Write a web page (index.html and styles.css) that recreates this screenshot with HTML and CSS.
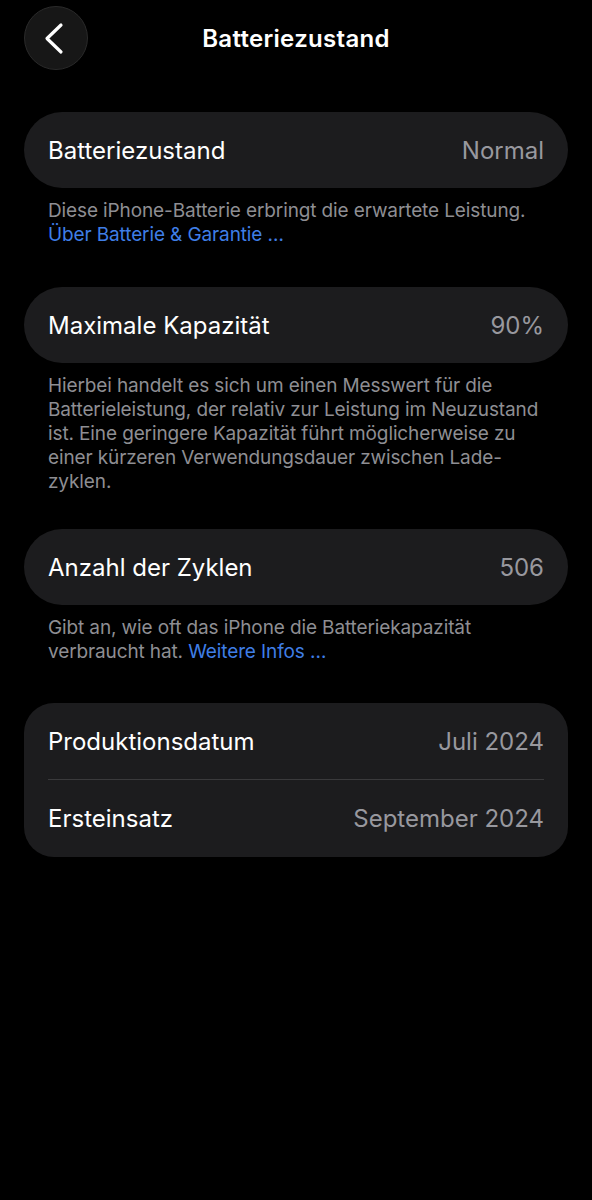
FILE: index.html
```html
<!DOCTYPE html>
<html lang="de">
<head>
<meta charset="utf-8">
<title>Batteriezustand</title>
<link rel="stylesheet" href="styles.css">
</head>
<body>
<div class="screen">
  <header class="nav">
    <button class="back" aria-label="Zurück">
      <svg width="64" height="64" viewBox="0 0 64 64"><path d="M37 19 L23 32.5 L37 46" fill="none" stroke="#fff" stroke-width="3.2" stroke-linecap="round" stroke-linejoin="round"/></svg>
    </button>
    <h1 class="title">Batteriezustand</h1>
    <span></span>
  </header>

  <section class="group">
    <div class="card">
      <div class="row"><span class="label">Batteriezustand</span><span class="value">Normal</span></div>
    </div>
    <p class="footer">Diese iPhone-Batterie erbringt die erwartete Leistung.<br><a class="link">Über Batterie &amp; Garantie …</a></p>
  </section>

  <section class="group">
    <div class="card">
      <div class="row"><span class="label">Maximale Kapazität</span><span class="value">90%</span></div>
    </div>
    <p class="footer">Hierbei handelt es sich um einen Messwert für die<br>Batterieleistung, der relativ zur Leistung im Neuzustand<br>ist. Eine geringere Kapazität führt möglicherweise zu<br>einer kürzeren Verwendungsdauer zwischen Lade-<br>zyklen.</p>
  </section>

  <section class="group">
    <div class="card">
      <div class="row"><span class="label">Anzahl der Zyklen</span><span class="value">506</span></div>
    </div>
    <p class="footer">Gibt an, wie oft das iPhone die Batteriekapazität<br>verbraucht hat. <a class="link">Weitere Infos …</a></p>
  </section>

  <section class="group">
    <div class="card card-multi">
      <div class="row"><span class="label">Produktionsdatum</span><span class="value">Juli 2024</span></div>
      <div class="sep"></div>
      <div class="row"><span class="label">Ersteinsatz</span><span class="value">September 2024</span></div>
    </div>
  </section>
</div>
</body>
</html>
```
FILE: styles.css
```css
* { box-sizing: border-box; }
html, body {
  margin: 0;
  padding: 0;
  background: #000;
}
body {
  font-family: Inter, "Noto Sans", "Liberation Sans", sans-serif;
  color: #fff;
  -webkit-font-smoothing: antialiased;
}
.screen {
  width: 592px;
  min-height: 1200px;
  padding: 6px 24px 0;
  display: flex;
  flex-direction: column;
}
.nav {
  display: grid;
  grid-template-columns: 64px 1fr 64px;
  align-items: center;
  height: 64px;
  margin-bottom: 42px;
}
.back {
  width: 64px;
  height: 64px;
  padding: 0;
  border-radius: 50%;
  background: #171717;
  border: 1px solid #2a2a2a;
  display: flex;
  align-items: center;
  justify-content: center;
}
.back svg { display: block; margin: -1px; }
.title {
  margin: 0;
  text-align: center;
  font-size: 24px;
  font-weight: 600;
  letter-spacing: 0.3px;
}
.group { margin-bottom: 37px; }
.group:nth-child(2) { margin-bottom: 40px; }
.group:nth-child(3) { margin-bottom: 35px; }
.group:nth-child(4) { margin-bottom: 39px; }
.card {
  background: #1c1c1e;
  border-radius: 38px;
  padding: 0 24px;
}
.card-multi { border-radius: 30px; }
.row {
  height: 76px;
  display: flex;
  align-items: center;
  justify-content: space-between;
}
.card-multi .row:last-child { height: 77px; }
.label {
  font-size: 24px;
  letter-spacing: 0;
}
.value {
  font-size: 24px;
  color: #98989e;
  letter-spacing: 0;
}
.sep {
  height: 1px;
  background: #3a3a3c;
}
.footer {
  margin: 11px 0 0;
  padding: 0 24px;
  font-size: 19px;
  line-height: 24px;
  color: #8e8e93;
  letter-spacing: -0.12px;
  white-space: nowrap;
}
.link { color: #3f7ee6; }
```
